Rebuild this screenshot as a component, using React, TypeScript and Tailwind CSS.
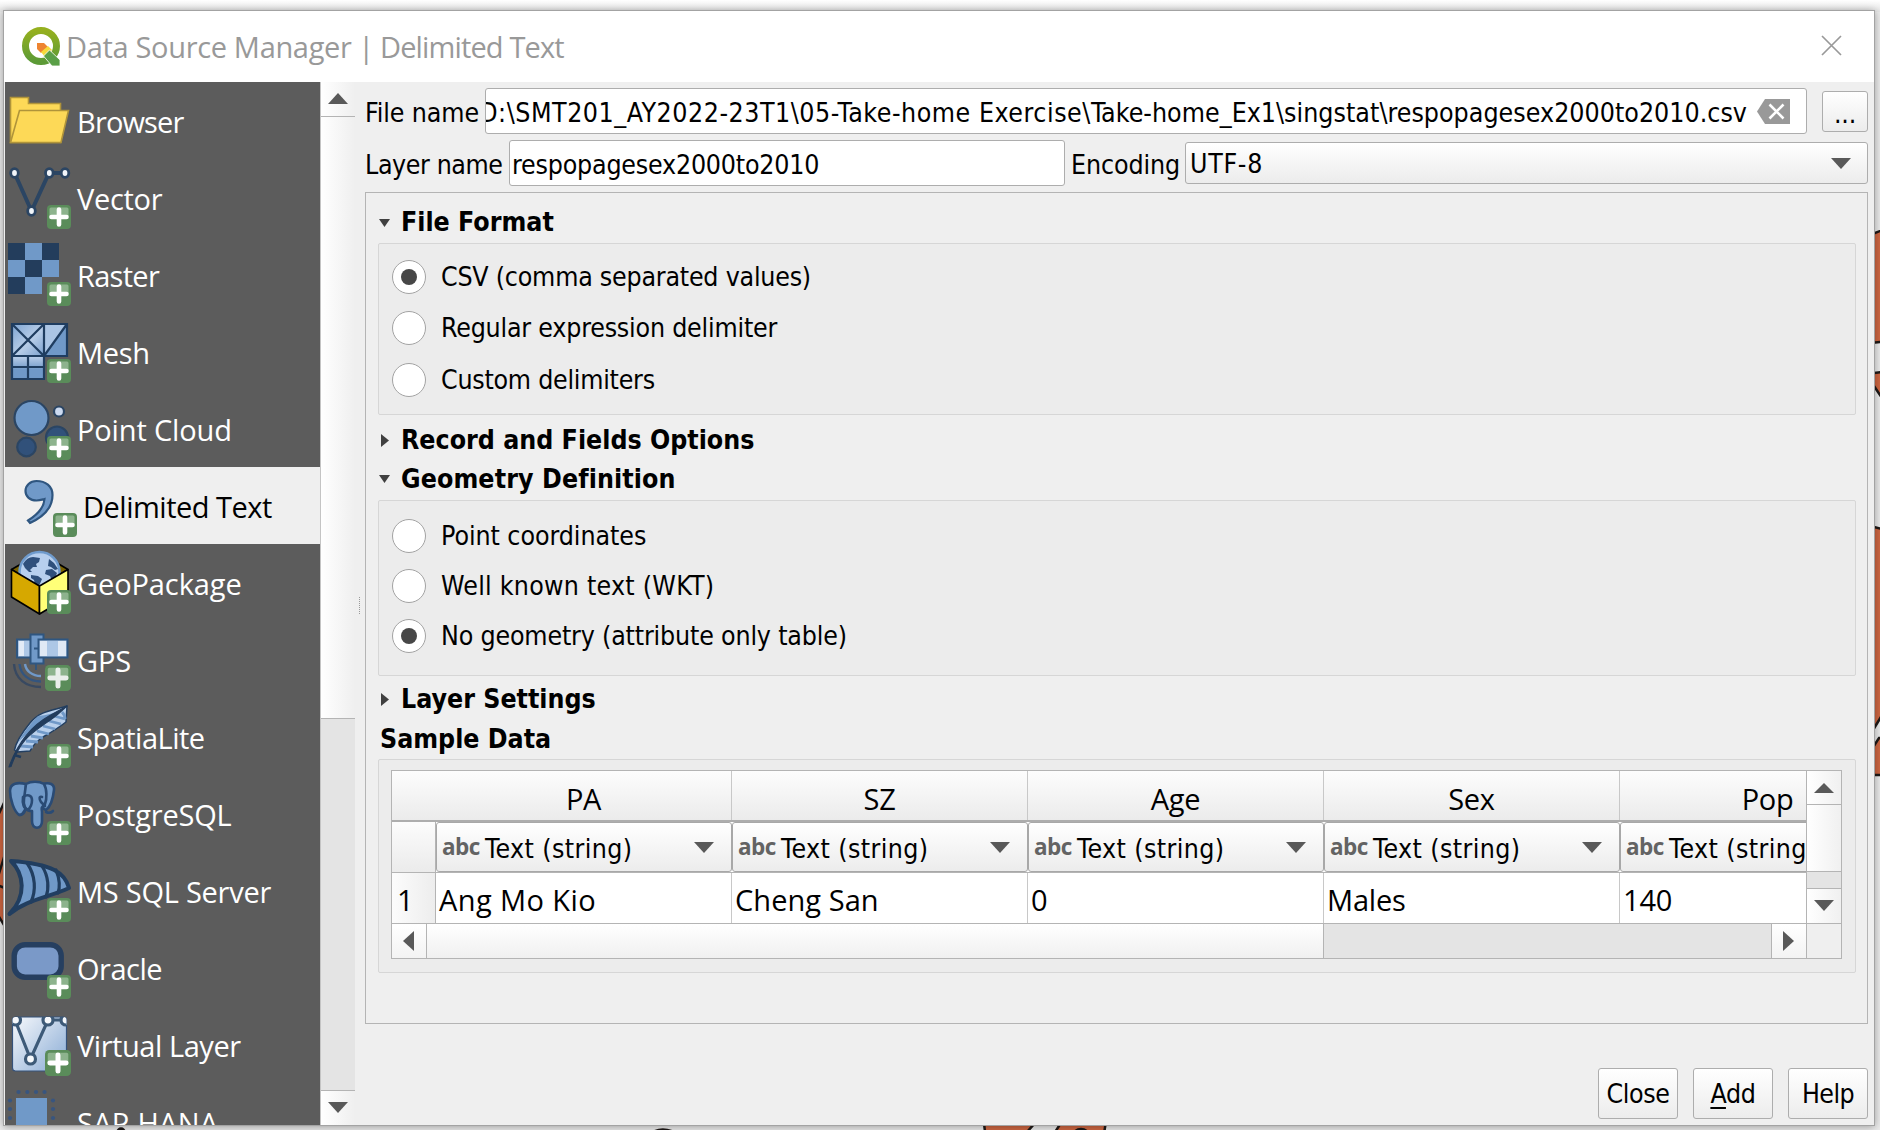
import type { ReactNode } from "react";

const NAVY = "#2b4563";
const BLUE = "#7099c8";

/* Green "add" badge in the corner of a source icon */
function Plus({ x = 47, y = 46, s = 24, c = "#fff" }: { x?: number; y?: number; s?: number; c?: string }) {
  return (
    <g transform={`translate(${x} ${y}) scale(${s / 24})`}>
      <rect width="24" height="24" rx="4" fill="#5a8c5a" />
      <path d="M4 2.5h16a1.5 1.5 0 0 1 1.500 1.500v7.500q-9-1-19 2V4A1.500 1.500 0 0 1 4 2.500z" fill="#8db38d" />
      <path d="M12 4.500v15M4.500 12h15" stroke={c} strokeWidth="4.600" strokeLinecap="round" />
    </g>
  );
}

function Node({ x, y, r = 3.8 }: { x: number; y: number; r?: number }) {
  return <ellipse cx={x} cy={y} rx={r} ry={r + 0.5} fill="#f1f5fa" stroke={NAVY} strokeWidth="2.800" />;
}

const folder = (
  <g fill="#fdd957" stroke="#b0943a" strokeWidth="1.600">
    <path d="M10.500 15.500h18v6h32v39h-50z" />
    <path d="M19.500 28.500h49l-7.500 32H10.500z" />
  </g>
);
const vector = (
  <g>
    <path d="M14.500 14L31.500 52L49 14H65" fill="none" stroke={NAVY} strokeWidth="4" />
    <Node x={14.5} y={14} /><Node x={31.5} y={52} /><Node x={49.300} y={14} /><Node x={65} y={14} />
    <Plus />
  </g>
);
const raster = (
  <g>
    <path d="M8 7h51v34H42v17H8z" fill={BLUE} />
    <path d="M8 7h17v17H8zM42 7h17v17H42zM25 24h17v17H25zM8 41h17v17H8z" fill="#233d5c" />
    <Plus />
  </g>
);
const mesh = (
  <g>
    <defs>
      <linearGradient id="mesh" x1="0" y1="0" x2="1" y2="1">
        <stop offset="0" stopColor="#7fa5d2" /><stop offset=".55" stopColor="#b7cde8" /><stop offset="1" stopColor="#7ba0cd" />
      </linearGradient>
      <linearGradient id="meshRow" x1="0" y1="0" x2="0" y2="1">
        <stop offset="0" stopColor="#bcd0ea" /><stop offset=".6" stopColor={BLUE} />
      </linearGradient>
    </defs>
    <path d="M12 11h32v32H12z" fill="url(#mesh)" />
    <path d="M44 11h23v32H44z" fill={BLUE} />
    <path d="M44 11h23L44 42z" fill="#abc5e4" />
    <path d="M12 43h32v23H12z" fill="url(#meshRow)" />
    <path d="M12 11h55v32H12zM12 11v55h32V11M12 11l32 32M44 11L12 43M67 11L44 43M28 43v23M12 54h32" fill="none" stroke="#1f3d60" strokeWidth="2.200" />
    <Plus />
  </g>
);
const pointCloud = (
  <g stroke={NAVY} strokeWidth="2.200">
    <circle cx="31.500" cy="28" r="17" fill={BLUE} />
    <circle cx="59" cy="21.500" r="5" fill="#ccdaf0" />
    <circle cx="57" cy="47.500" r="11" fill="#31517a" />
    <circle cx="26.500" cy="57" r="9.300" fill="#31517a" />
    <g stroke="none"><Plus /></g>
  </g>
);
const comma = (
  <g>
    <path d="M36.500 14C30 14 25.500 18.500 25.500 24s4.500 9.500 11 9.500c3.500 0 6-1 8-1.500c-.5 8-6 15-16.500 21.500l2 2.500C44 49.500 52.500 40 52.500 28C52.500 19 45.500 14 36.500 14z" fill={BLUE} stroke="#2f5680" strokeWidth="2.200" />
    <Plus x={53} />
  </g>
);
const geoPackage = (
  <g strokeLinejoin="round">
    <path d="M11.500 25.500L28 16h24l16 9.500L39.500 43z" fill="#7a6200" stroke="#000" strokeWidth="1.600" />
    <circle cx="39.500" cy="28" r="20" fill="#b7cfee" stroke="#6f9bcd" strokeWidth="2.500" />
    <path d="M23 20q4-7 10-7l7 1-1 4-3 2 1 3-4 0-3 3 2 2-3 0-4-4zM31 31l7 1 4 3-3 7-4-1-1-5-3-2zM49 15l5 4 4 6-3 1-4-3-3-1zM46 26l6-1 5 4-2 5-3 3-2-5-5-2z" fill="#2f507c" />
    <path d="M11.500 25.500L39.500 42v28L11.500 53z" fill="#d6a800" stroke="#000" strokeWidth="1.600" />
    <path d="M68 25.500L39.500 42v28L68 53z" fill="#ffff78" stroke="#000" strokeWidth="1.600" />
    <Plus />
  </g>
);
const gps = (
  <g>
    <path d="M17 18.500h14v18H17z" fill="#adc7e6" stroke="#2f5680" strokeWidth="2" />
    <path d="M19 20h5v15h-5z" fill="#e3ebf6" />
    <path d="M30.500 13.500h13v29h-13z" fill={BLUE} stroke="#2f5680" strokeWidth="2" />
    <path d="M34 27.500h4M36 43v6" stroke="#2f5680" strokeWidth="1.800" />
    <path d="M38.500 18.500h29v18h-29z" fill="#adc7e6" stroke="#2f5680" strokeWidth="2" />
    <path d="M40 20h7v15h-7zM58 20h8v15h-8z" fill="#e0e9f5" />
    <path d="M14 43c1 15 12 23 27 23" fill="none" stroke="#384961" strokeWidth="2.400" />
    <path d="M19.500 43c1 11 10 17.500 21.500 17.500" fill="none" stroke="#33557f" strokeWidth="2.400" />
    <path d="M25 43c1 7 7 12 16 12" fill="none" stroke={BLUE} strokeWidth="2.400" />
    <Plus x={45} y={44} s={26} c="#e9eeea" />
  </g>
);
const feather = (
  <g strokeLinejoin="round">
    <path d="M67 8C50 13 40 13 30 25C21 36 16 44 14.500 52L17 54l13-1q4-8 13-14q14-8 23-15z" fill="#b9d0ec" stroke="#233f61" strokeWidth="1.500" />
    <path d="M65 11Q50 17 38 18Q26 30 18 44L36 28z" fill={BLUE} />
    <path d="M62 14q3 3 3 7M54 18l11 3M49 23l12 3M43 28l12 3M37 33l12 3M31 38l12 2M26 43l12 1M21 48l12 1" stroke={BLUE} strokeWidth="2.800" fill="none" />
    <path d="M67 8L49 18C33 27 18 44 9 69l2-.5C14 60 18 50 25 42C35 31 49 24 58 16z" fill="#223c5c" stroke="#223c5c" strokeWidth="1.200" />
    <path d="M14 57l7 2" stroke="#223c5c" strokeWidth="2.500" />
    <Plus />
  </g>
);
const elephant = (
  <g fill={BLUE} stroke="#2a4b75" strokeWidth="2.600" strokeLinejoin="round" strokeLinecap="round">
    <path d="M42 9c8-2 12.500 0 12 6c-1 9-4 17-8 20c-5-2-7-9-5-18z" />
    <path d="M26 9c-8-2-16-1-16 7c0 8 4 21 9.500 24c3 0 4-3 6-6z" />
    <path d="M26 9c5-3 13-3 18 0c3 5 3 15 1 20c-3 3-4 3-3 8v9c0 9-10 9-10 0V36c-7 0-9-6-8-12z" />
    <path d="M23 22c4-3 9-2 9 3c0 5-1 7-4 10c-4-1-6-6-5-13zM42 22c-3-1-3 2-1 5l4 4M25 36q-2 4-5 4M46 37q4 2 7-1" fill="none" />
    <g stroke="none"><Plus /></g>
  </g>
);
const sqlServer = (
  <g stroke="#213e60" strokeLinejoin="round" strokeLinecap="round">
    <path d="M11 9C24 22 27 44 9.500 62C26 48 47 46 69 36C65 21 53 12 11 9z" fill={BLUE} strokeWidth="4" />
    <path d="M27 11C36 24 36 39 31 50M42 14c7 11 7 23 4 31M56 18c4 9 4 18 2 23" fill="none" strokeWidth="3.200" />
    <g stroke="none"><Plus /></g>
  </g>
);
const oracle = (
  <g>
    <rect x="14.200" y="15.700" width="47" height="32.500" rx="11" fill="#7a99c8" stroke="#263f60" strokeWidth="5.400" />
    <Plus />
  </g>
);
const virtualLayer = (
  <g>
    <defs>
      <linearGradient id="virt" x1="0" y1="0" x2="1" y2=".9">
        <stop offset="0" stopColor="#f7f9fc" /><stop offset="1" stopColor="#8daed6" />
      </linearGradient>
      <clipPath id="virtClip"><rect x="12.500" y="11" width="54" height="54" rx="3" /></clipPath>
    </defs>
    <rect x="12.500" y="11" width="54" height="54" rx="3" fill="url(#virt)" stroke="#35527b" strokeWidth="1.200" />
    <g clipPath="url(#virtClip)" stroke="#3d5a78" strokeWidth="3.200" fill="#f5f8fb">
      <path d="M15 14L30.500 53L48 14H65" fill="none" />
      <circle cx="15.500" cy="14" r="5" /><circle cx="48" cy="14" r="5" /><circle cx="66" cy="14" r="5" /><circle cx="30.500" cy="53" r="5" />
    </g>
    <Plus x={45} y={44} s={26} />
  </g>
);
const hana = (
  <g>
    <rect x="16" y="15" width="31" height="40" fill={BLUE} />
    <g fill="#38557f">
      {[18.5, 27.300, 36, 44.500].map((x) => <circle key={x} cx={x} cy="9" r="2.100" />)}
      {[17.500, 26, 35].map((y) => <g key={y}><circle cx="10" cy={y} r="2.100" /><circle cx="53" cy={y} r="2.100" /></g>)}
    </g>
  </g>
);

const SOURCES: { label: string; icon: ReactNode; track: string; active?: boolean }[] = [
  { label: "Browser", icon: folder, track: "tracking-[-0.85px]" },
  { label: "Vector", icon: vector, track: "tracking-[-0.3px]" },
  { label: "Raster", icon: raster, track: "tracking-[-0.7px]" },
  { label: "Mesh", icon: mesh, track: "tracking-[-0.3px]" },
  { label: "Point Cloud", icon: pointCloud, track: "tracking-[-0.15px]" },
  { label: "Delimited Text", icon: comma, track: "tracking-[-0.5px]", active: true },
  { label: "GeoPackage", icon: geoPackage, track: "tracking-[-0.1px]" },
  { label: "GPS", icon: gps, track: "tracking-[-0.1px]" },
  { label: "SpatiaLite", icon: feather, track: "tracking-[-0.5px]" },
  { label: "PostgreSQL", icon: elephant, track: "tracking-[-0.2px]" },
  { label: "MS SQL Server", icon: sqlServer, track: "tracking-[-0.25px]" },
  { label: "Oracle", icon: oracle, track: "tracking-[-0.5px]" },
  { label: "Virtual Layer", icon: virtualLayer, track: "tracking-[-0.45px]" },
  { label: "SAP HANA", icon: hana, track: "tracking-[0.3px]" },
];

const ARROWS = {
  up: "M0 10L10 0L20 10z",
  down: "M0 0h20L10 10z",
  left: "M10 0v20L0 10z",
  right: "M0 0v20L10 10z",
};
function Arrow({ dir, className }: { dir: keyof typeof ARROWS; className: string }) {
  const flat = dir === "up" || dir === "down";
  return (
    <svg className={`shrink-0 ${className}`} viewBox={flat ? "0 0 20 10" : "0 0 10 20"} preserveAspectRatio="none">
      <path d={ARROWS[dir]} fill="currentColor" />
    </svg>
  );
}

function Section({ label, open, className }: { label: string; open?: boolean; className: string }) {
  return (
    <div className={`flex items-center text-[26.5px] font-bold ${className}`}>
      <span className="flex w-[23px] justify-start pl-px text-[#404040]">
        {open ? <Arrow dir="down" className="h-[8px] w-[11px]" /> : <Arrow dir="right" className="ml-[2px] h-[13px] w-[8px]" />}
      </span>
      {label}
    </div>
  );
}

function Radio({ label, checked, className }: { label: string; checked?: boolean; className: string }) {
  return (
    <label className={`flex items-center pl-[13px] ${className}`}>
      <span className="mr-[15px] flex size-[34px] items-center justify-center rounded-full border border-[#a3a3a3] bg-white">
        {checked && <span className="size-4 rounded-full bg-[#474747]" />}
      </span>
      {label}
    </label>
  );
}

function Button({ children, className }: { children: ReactNode; className: string }) {
  return (
    <button className={`flex items-center justify-center rounded-[3px] border border-[#adadad] bg-linear-to-b from-white to-[#ececec] whitespace-nowrap ${className}`}>
      {children}
    </button>
  );
}

const COLUMNS = [
  { name: "PA", value: "Ang Mo Kio", track: "tracking-[0.4px]" },
  { name: "SZ", value: "Cheng San", track: "tracking-[0.05px]" },
  { name: "Age", value: "0", track: "tracking-[0px]" },
  { name: "Sex", value: "Males", track: "tracking-[-0.2px]" },
  { name: "Pop", value: "140", track: "tracking-[-0.2px]" },
];

function SampleTable() {
  return (
    <div className="flex h-[189px] w-[1451px] border border-[#b4b4b4] bg-white">
      <div className="flex w-[1415px] flex-col overflow-hidden border-r border-[#b4b4b4]">
        <div className="flex h-[51px] shrink-0 border-b-2 border-[#adadad] bg-linear-to-b from-[#fdfdfd] to-[#ebebeb] font-['Open_Sans',sans-serif] text-[29px] tracking-[-0.3px]">
          <div className="w-[44px] shrink-0" />
          {COLUMNS.map((c) => (
            <div key={c.name} className="flex w-[296px] shrink-0 items-center justify-center border-r border-[#c8c8c8] pt-[6px]">{c.name}</div>
          ))}
        </div>
        <div className="flex h-[51px] shrink-0 border-b border-[#b4b4b4]">
          <div className="w-[44px] shrink-0 border-r border-[#b4b4b4] bg-linear-to-b from-[#fcfcfc] to-[#ebebeb]" />
          {COLUMNS.map((c) => (
            <div key={c.name} className="flex w-[296px] shrink-0 items-center rounded-[3px] border border-[#a8a8a8] bg-linear-to-b from-white to-[#ececec] pr-[17px] pl-[5px]">
              <span className="w-[43px] font-['Open_Sans',sans-serif] text-[22.500px] font-bold tracking-[-0.6px] text-[#636363]">abc</span>
              <span className="flex-1 pt-[4px] tracking-[0.4px] whitespace-nowrap">Text (string)</span>
              <Arrow dir="down" className="h-[11px] w-[20px] text-[#595959]" />
            </div>
          ))}
        </div>
        <div className="flex h-[51px] shrink-0 border-b border-[#b4b4b4] font-['Open_Sans',sans-serif] text-[29px]">
          <div className="w-[44px] shrink-0 border-r border-[#b4b4b4] bg-linear-to-r from-[#fcfcfc] to-[#ededed] pt-[7px] pl-[5px]">1</div>
          {COLUMNS.map((c) => (
            <div key={c.name} className={`w-[296px] shrink-0 border-r border-[#c8c8c8] pt-[7px] pl-[3px] whitespace-nowrap ${c.track}`}>{c.value}</div>
          ))}
        </div>
        <div className="flex flex-1 bg-[#e4e4e4] text-[#595959]">
          <div className="flex w-[35px] items-center border-r border-[#b4b4b4] bg-linear-to-b from-white to-[#f3f3f3] pl-[11px]"><Arrow dir="left" className="h-[20px] w-[11px]" /></div>
          <div className="w-[897px] border-r border-[#b4b4b4] bg-linear-to-b from-white to-[#f0f0f0]" />
          <div className="ml-auto flex w-[35px] items-center border-l border-[#b4b4b4] bg-linear-to-b from-white to-[#f3f3f3] pl-[11px]"><Arrow dir="right" className="h-[20px] w-[11px]" /></div>
        </div>
      </div>
      <div className="flex flex-1 flex-col bg-[#efefef] text-[#595959]">
        <div className="flex h-[34px] items-center justify-center border-b border-[#b4b4b4] bg-linear-to-r from-white to-[#f0f0f0]"><Arrow dir="up" className="h-[10px] w-[20px]" /></div>
        <div className="h-[67px] border-b border-[#b4b4b4] bg-linear-to-r from-white to-[#f0f0f0]" />
        <div className="h-[17px] border-b border-[#b4b4b4] bg-[#e4e4e4]" />
        <div className="flex h-[35px] items-center justify-center border-b border-[#b4b4b4] bg-linear-to-r from-white to-[#f0f0f0] pb-[2px]"><Arrow dir="down" className="h-[11px] w-[20px]" /></div>
      </div>
    </div>
  );
}

/* Map polygons showing around the dialog's edges */
function MapBackdrop() {
  return (
    <svg className="absolute inset-0 size-full" viewBox="0 0 1880 1130">
      <g fill="#cf6742" stroke="#1f1a18" strokeWidth="2.500">
        <path d="M1870 235L1890 227V341L1870 343z" />
        <path d="M1870 373.500L1890 371V410L1870 380z" />
        <path d="M1870 526L1890 531V702L1870 735z" />
        <path d="M1870 752L1879 738H1890V775H1870z" />
        <path d="M-5 822L10 790V935L-5 910z" />
        <path d="M-3 880L10 838M-3 885L10 890" fill="none" />
        <path d="M983 1115L986 1140H1020L1042 1115zM1066 1115L1050 1140H1103L1107 1115z" />
        <path d="M648 1136q12-12 30-2" />
        <circle cx="1081" cy="1138" r="9" />
        <circle cx="121" cy="1132" r="3.500" fill="#1f1a18" />
      </g>
    </svg>
  );
}

export default function App() {
  return (
    <div className="relative h-[1130px] w-[1880px] overflow-hidden bg-[#ececec] font-['DejaVu_Sans_Condensed','DejaVu_Sans',sans-serif] text-[26.5px] leading-[1.36] tracking-[-0.2px] text-black">
      <div className="h-[12px] bg-linear-to-b from-white to-[#e6e6e6]" />
      <MapBackdrop />
      <div className="absolute top-[10px] left-[3px] flex h-[1116px] w-[1872px] flex-col border border-[#a3a3a3] bg-[#efefef] shadow-[0_1px_8px_rgba(0,0,0,0.35)]">
        <header className="flex h-[71px] shrink-0 items-center bg-white pl-[17px] font-['Open_Sans',sans-serif] text-[29px] tracking-[-0.56px] text-[#999]">
          <svg className="mt-[-1px] h-[39px] w-[40px] shrink-0" viewBox="0 0 40 39" preserveAspectRatio="none">
            <defs>
              <linearGradient id="q" x1="0" y1="0" x2="0" y2="1"><stop offset="0" stopColor="#95b01f" /><stop offset="1" stopColor="#5c9a36" /></linearGradient>
            </defs>
            <circle cx="20" cy="19" r="15.500" fill="none" stroke="url(#q)" strokeWidth="7" />
            <path d="M16 16h7l4 4-7 6-4-4z" fill="#ee8431" />
            <path d="M20 25l7-6 4 4-7 7z" fill="#f5da3b" />
            <path d="M22.500 29l6-6L39 33v6h-8z" fill="#5a9f47" stroke="#fff" strokeWidth=".8" />
          </svg>
          <h1 className="ml-[5px] pt-px">
            <span className="tracking-[-0.33px]">Data Source Manager</span><span className="tracking-[-0.86px]"> | Delimited Text</span>
          </h1>
          <svg className="mt-[-2px] mr-[32px] ml-auto size-[21px]" viewBox="0 0 21 21"><path d="M1 1l19 19M20 1L1 20" stroke="#999" strokeWidth="1.700" /></svg>
        </header>

        <div className="flex min-h-0 flex-1">
          <nav className="ml-px w-[315px] shrink-0 overflow-hidden bg-[#5c5c5c] font-['Open_Sans',sans-serif] text-[29px] text-white">
            {SOURCES.map((s) => (
              <div key={s.label} className={`flex h-[77px] items-center ${s.active ? "bg-[#efefef] text-black" : ""}`}>
                {s.active ? (
                  <svg className="h-[77px] w-[78px] shrink-0" viewBox="5 0 78 77">{s.icon}</svg>
                ) : (
                  <svg className="h-[77px] w-[72px] shrink-0" viewBox="5 0 72 77">{s.icon}</svg>
                )}
                <span className={`pt-[2px] whitespace-nowrap ${s.track}`}>{s.label}</span>
              </div>
            ))}
          </nav>
          <div className="flex w-[35px] shrink-0 flex-col border-l border-[#c4c4c4] bg-[#e4e4e4] text-[#595959]">
            <div className="flex h-[35px] items-center justify-center border-b border-[#b4b4b4] bg-linear-to-r from-white to-[#efefef] pb-px"><Arrow dir="up" className="h-[11px] w-[20px]" /></div>
            <div className="h-[602px] border-b border-[#b4b4b4] bg-linear-to-r from-white to-[#efefef]" />
            <div className="mt-auto flex h-[35px] items-center justify-center border-t border-[#b4b4b4] bg-linear-to-r from-white to-[#efefef] pb-px"><Arrow dir="down" className="h-[11px] w-[20px]" /></div>
          </div>
          <div className="flex w-[10px] shrink-0 items-start justify-center pt-[515px]">
            <div className="h-[17px] w-[2px] border-l border-dotted border-[#999]" />
          </div>

          <main className="flex min-w-0 flex-1 flex-col pt-[6px] pr-[6px]">
            <div className="flex h-[46px] items-center">
              <span className="w-[120px] shrink-0 pt-[4px] tracking-[-0.1px] whitespace-nowrap">File name</span>
              <div className="flex h-[46px] w-[1322px] items-center justify-end overflow-hidden rounded-[3px] border border-[#adadad] bg-white pr-[16px]">
                <span className="shrink-0 pt-[4px] whitespace-nowrap">
                  <span className="tracking-[0.54px]">D:\SMT201_AY2022-23T1\05-Take-home Exercise\</span>
                  <span className="tracking-[0.03px]">Take-home_Ex1\singstat\respopagesex2000to2010.csv</span>
                </span>
                <svg className="ml-[10px] h-[25px] w-[33px] shrink-0" viewBox="0 0 33 25"><path d="M8 0h25v25H8L0 12.500z" fill="#999" /><path d="M12.500 5.500l14 14M26.500 5.500l-14 14" stroke="#fff" strokeWidth="2.600" /></svg>
              </div>
              <Button className="ml-auto h-[41px] w-[46px] pt-[6px]">...</Button>
            </div>
            <div className="mt-[6px] flex h-[46px] items-center">
              <span className="w-[144px] shrink-0 pt-[4px] tracking-[-0.4px] whitespace-nowrap">Layer name</span>
              <div className="flex h-[46px] w-[556px] items-center rounded-[3px] border border-[#adadad] bg-white pt-[4px] pl-[2px] tracking-[-0.2px]">respopagesex2000to2010</div>
              <span className="ml-[6px] w-[114px] shrink-0 pt-[4px] tracking-[-0.1px]">Encoding</span>
              <div className="flex h-[42px] flex-1 items-center rounded-[3px] border border-[#adadad] bg-linear-to-b from-white to-[#ececec] pr-[16px] pl-[4px] tracking-[0.7px]">
                <span className="pt-[2px]">UTF-8</span>
                <Arrow dir="down" className="ml-auto h-[11px] w-[20px] text-[#595959]" />
              </div>
            </div>

            <section className="mt-[6px] h-[832px] border border-[#b4b4b4] pr-[11px] pl-[12px] tracking-[0px]">
              <Section label="File Format" open className="h-[50px] pt-[9px]" />
              <div className="h-[172px] rounded-[2px] border border-[#d6d6d6] bg-[#ececec] pt-[7px]">
                <Radio className="h-[51.500px] tracking-[-0.22px]" label="CSV (comma separated values)" checked />
                <Radio className="h-[51.500px] tracking-[-0.2px]" label="Regular expression delimiter" />
                <Radio className="h-[51.500px] tracking-[-0.25px]" label="Custom delimiters" />
              </div>
              <Section label="Record and Fields Options" className="mt-[6px] h-[39px]" />
              <Section label="Geometry Definition" open className="h-[40px] pb-[2px] tracking-[0.1px]" />
              <div className="h-[176px] rounded-[2px] border border-[#d6d6d6] bg-[#ececec] pt-[10px]">
                <Radio className="h-[50px] tracking-[-0.05px]" label="Point coordinates" />
                <Radio className="h-[50px] tracking-[0.25px]" label="Well known text (WKT)" />
                <Radio className="h-[50px] tracking-[-0.17px]" label="No geometry (attribute only table)" checked />
              </div>
              <Section label="Layer Settings" className="mt-[3px] h-[40px] pt-px" />
              <div className="flex h-[40px] items-center pt-px pl-[2px] font-bold">Sample Data</div>
              <div className="h-[214px] rounded-[2px] border border-[#d6d6d6] bg-[#ececec] pt-[10px] pl-[12px]">
                <SampleTable />
              </div>
            </section>

            <footer className="mt-[44px] flex justify-end gap-[15px]">
              <Button className="h-[51px] w-[80px] pt-[2px] tracking-[-0.4px]">Close</Button>
              <Button className="h-[51px] w-[80px] pt-[2px] tracking-[-0.3px]"><span><span className="underline decoration-2 underline-offset-4">A</span>dd</span></Button>
              <Button className="h-[51px] w-[80px] pt-[2px] tracking-[-0.6px]">Help</Button>
            </footer>
          </main>
        </div>
      </div>
    </div>
  );
}
